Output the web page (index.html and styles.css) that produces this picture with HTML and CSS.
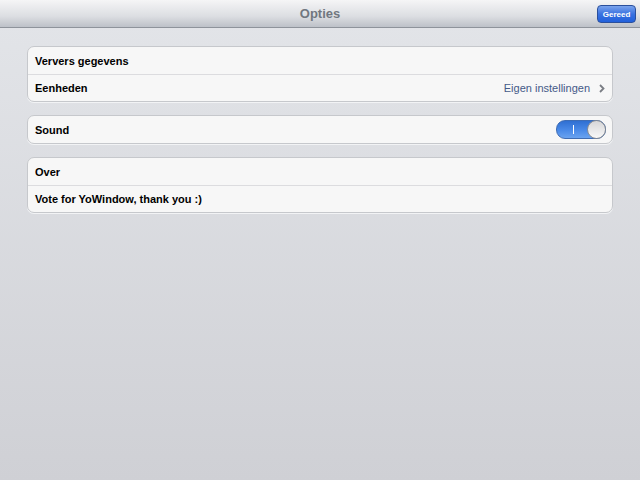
FILE: index.html
```html
<!DOCTYPE html>
<html lang="nl">
<head>
    <meta charset="UTF-8">
    <title>Opties</title>
    <link rel="stylesheet" href="styles.css">
</head>
<body>
    <div class="navbar">
        <span class="title">Opties</span>
        <button class="done" type="button">Gereed</button>
    </div>
    <div class="content">
        <div class="group">
            <div class="row"><span class="label">Ververs gegevens</span></div>
            <div class="row">
                <span class="label">Eenheden</span>
                <span class="value">Eigen instellingen</span>
                <svg class="chevron" width="6" height="9" viewBox="0 0 6 9"><path d="M1 1 L4.5 4.5 L1 8" fill="none" stroke="#7a7d84" stroke-width="1.8"/></svg>
            </div>
        </div>
        <div class="group">
            <div class="row">
                <span class="label">Sound</span>
                <div class="switch">
                    <span class="on-mark"></span>
                    <span class="knob"></span>
                </div>
            </div>
        </div>
        <div class="group">
            <div class="row"><span class="label">Over</span></div>
            <div class="row"><span class="label">Vote for YoWindow, thank you :)</span></div>
        </div>
    </div>
</body>
</html>
```

FILE: styles.css
```css
html, body {
    height: 100%;
}
body {
    margin: 0;
    font-family: "Liberation Sans", Arial, sans-serif;
    background: linear-gradient(#e3e5e9, #cfd0d5);
}
.navbar {
    position: relative;
    height: 27px;
    display: flex;
    justify-content: center;
    align-items: center;
    background: linear-gradient(#f5f5f6, #dcdee2 60%, #bdc1c8);
    border-bottom: 1px solid #8e939b;
}
.title {
    font-size: 13px;
    font-weight: bold;
    color: #71777f;
}
.done {
    position: absolute;
    right: 4px;
    top: 5px;
    width: 39px;
    height: 18px;
    padding: 0;
    font-family: "Liberation Sans", Arial, sans-serif;
    font-size: 8px;
    font-weight: bold;
    color: #fff;
    background: linear-gradient(#7aa3ec, #3a72e0 50%, #2160dc);
    border: 1px solid #2a4f9c;
    border-radius: 4px;
}
.content {
    padding: 18px 27px 0 27px;
    display: flex;
    flex-direction: column;
    gap: 13px;
}
.group {
    background: #f7f7f7;
    border: 1px solid #c6c8cc;
    border-radius: 7px;
    box-shadow: 0 1px 0 #f2f3f5;
}
.row {
    box-sizing: border-box;
    height: 27px;
    display: flex;
    align-items: center;
    padding: 0 7px;
    border-top: 1px solid #dcdcdf;
}
.row:first-child {
    border-top: none;
}
.label {
    flex: 1;
    font-size: 11px;
    font-weight: bold;
    color: #000;
}
.value {
    font-size: 11px;
    color: #455a88;
    margin-right: 9px;
}
.chevron {
    margin-right: 0;
}
.switch {
    position: relative;
    width: 48px;
    height: 17px;
    margin-right: -1px;
    border-radius: 9px;
    border: 1px solid #3e6cb4;
    background: linear-gradient(#2f6fd2, #4a8ae8 55%, #6aa3f0);
}
.on-mark {
    position: absolute;
    left: 16px;
    top: 4px;
    width: 1px;
    height: 9px;
    background: #fff;
}
.knob {
    position: absolute;
    right: -1px;
    top: -1px;
    width: 17px;
    height: 17px;
    border-radius: 50%;
    border: 1px solid #8a8d92;
    background: linear-gradient(#d6d6d8, #f8f8f8);
}
```
